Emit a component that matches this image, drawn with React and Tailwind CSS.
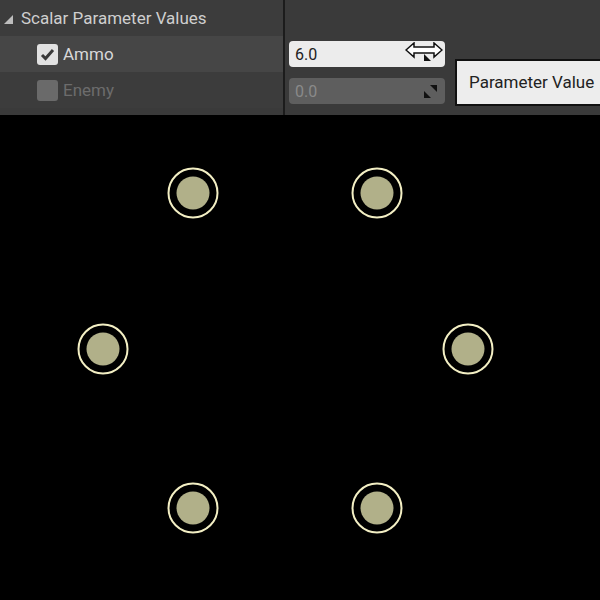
import React from "react";

const dots = [
  [193, 78],
  [377, 78],
  [103, 234],
  [468, 234],
  [193, 393],
  [377, 393],
];

function ResizeIcon({ className }) {
  return (
    <svg width="13" height="13" viewBox="0 0 13 13" className={className}>
      <polygon points="6,0 13,0 13,7" fill="#111" />
      <polygon points="0,6 0,13 7,13" fill="#111" />
    </svg>
  );
}

export default function App() {
  return (
    <div
      className="w-[600px] h-[600px] bg-black overflow-hidden relative"
      style={{ fontFamily: "Roboto, 'Liberation Sans', sans-serif" }}
    >
      <div className="flex h-[115px] bg-[#3a3a3a]">
        <div className="w-[283px] flex flex-col">
          <div className="h-[36px] flex items-center bg-[#3c3c3c] pl-[4px] pt-[2px]">
            <svg width="9" height="9" viewBox="0 0 9 9" className="mr-[8px]">
              <polygon points="9,0 9,9 0,9" fill="#bdbdbd" />
            </svg>
            <span className="text-[17px] text-[#cfcfcf]">Scalar Parameter Values</span>
          </div>
          <div className="h-[36px] flex items-center bg-[#464646] pl-[37px]">
            <div className="w-[21px] h-[21px] rounded-[3px] bg-[#e2e2e2] flex items-center justify-center">
              <svg width="15" height="13" viewBox="0 0 15 13">
                <path d="M2 7 L5.5 10.5 L13 2" stroke="#3a3a3a" strokeWidth="3" fill="none" />
              </svg>
            </div>
            <span className="ml-[5px] text-[17px] text-[#d8d8d8] pt-[2px]">Ammo</span>
          </div>
          <div className="h-[36px] flex items-center bg-[#3c3c3c] pl-[37px]">
            <div className="w-[21px] h-[21px] rounded-[3px] bg-[#6a6a6a]"></div>
            <span className="ml-[5px] text-[17px] text-[#6c6c6c] pt-[2px]">Enemy</span>
          </div>
        </div>
        <div className="w-[2px] bg-[#1c1c1c]"></div>
        <div className="flex-1 flex flex-col pl-[4px] pt-[41px] gap-[11px]">
          <div className="w-[156px] h-[26px] rounded-[4px] bg-[#ececec] flex items-center justify-between pl-[6px] pr-[8px] relative">
            <span className="text-[16px] text-[#222] pt-[1px]">6.0</span>
            <ResizeIcon />
            <svg width="38" height="18" viewBox="0 0 38 18" className="absolute left-[116px] top-[1px]">
              <path
                d="M1 8 L9 1 L9 5 L29 5 L29 1 L37 8 L29 15 L29 11 L9 11 L9 15 Z"
                fill="#fff"
                stroke="#111"
                strokeWidth="1.5"
                strokeLinejoin="miter"
              />
            </svg>
          </div>
          <div className="w-[156px] h-[26px] rounded-[4px] bg-[#5e5e5e] flex items-center justify-between pl-[6px] pr-[8px]">
            <span className="text-[16px] text-[#8a8a8a] pt-[1px]">0.0</span>
            <ResizeIcon />
          </div>
        </div>
      </div>
      <div className="absolute left-[455px] top-[59px] w-[150px] h-[47px] bg-[#ededed] border-[2px] border-[#111] flex items-center pl-[12px]">
        <span className="text-[17px] text-[#222] whitespace-nowrap">Parameter Value</span>
      </div>
      <div className="relative h-[485px]">
        <svg width="600" height="485" className="absolute left-0 top-0">
          {dots.map(([x, y], i) => (
            <g key={i}>
              <circle cx={x} cy={y} r="24.5" fill="none" stroke="#f3efc4" strokeWidth="2" />
              <circle cx={x} cy={y} r="16.5" fill="#b1b089" />
            </g>
          ))}
        </svg>
      </div>
    </div>
  );
}
